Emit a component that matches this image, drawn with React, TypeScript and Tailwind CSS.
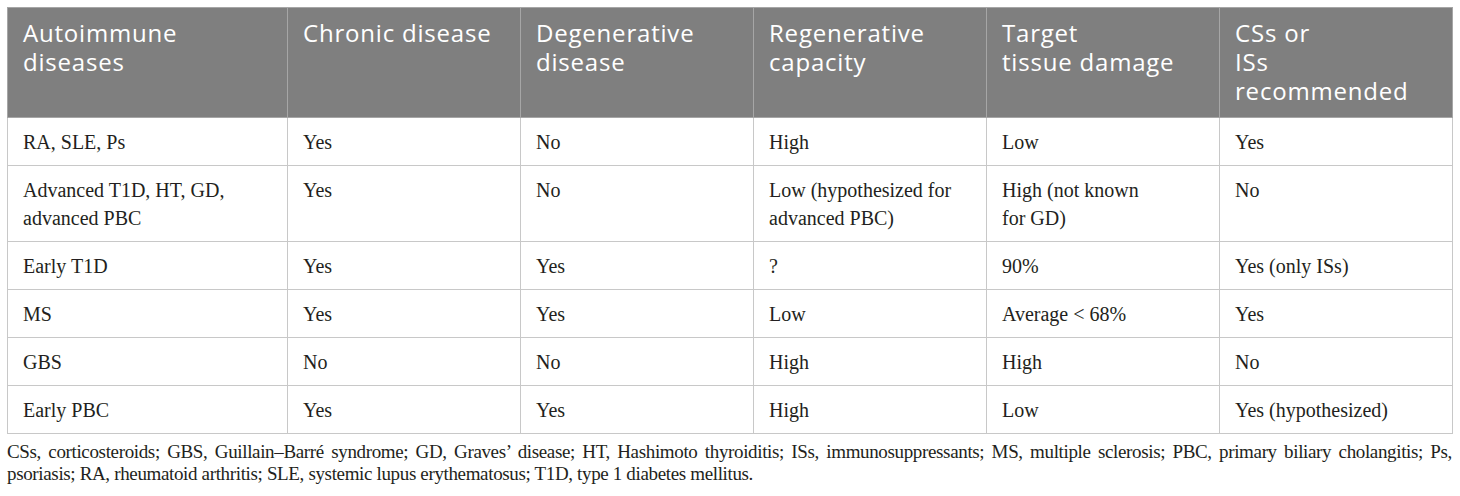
const headerLines: string[][] = [
  ["Autoimmune", "diseases"],
  ["Chronic disease"],
  ["Degenerative", "disease"],
  ["Regenerative", "capacity"],
  ["Target", "tissue damage"],
  ["CSs or", "ISs", "recommended"],
];

// each cell is a list of lines, broken where the reference breaks them
const rows: string[][][] = [
  [["RA, SLE, Ps"], ["Yes"], ["No"], ["High"], ["Low"], ["Yes"]],
  [
    ["Advanced T1D, HT, GD,", "advanced PBC"],
    ["Yes"],
    ["No"],
    ["Low (hypothesized for", "advanced PBC)"],
    ["High (not known", "for GD)"],
    ["No"],
  ],
  [["Early T1D"], ["Yes"], ["Yes"], ["?"], ["90%"], ["Yes (only ISs)"]],
  [["MS"], ["Yes"], ["Yes"], ["Low"], ["Average < 68%"], ["Yes"]],
  [["GBS"], ["No"], ["No"], ["High"], ["High"], ["No"]],
  [["Early PBC"], ["Yes"], ["Yes"], ["High"], ["Low"], ["Yes (hypothesized)"]],
];

export default function App() {
  return (
    <div className="w-[1460px] h-[496px] bg-white pt-[7px] pl-[7px] pr-[8px]">
      <table className="w-[1445px] table-fixed border-collapse">
        <colgroup>
          <col className="w-[280px]" />
          <col className="w-[233px]" />
          <col className="w-[233px]" />
          <col className="w-[233px]" />
          <col className="w-[233px]" />
          <col className="w-[233px]" />
        </colgroup>
        <thead>
          <tr className="bg-[#7f7f7f] h-[110px]">
            {headerLines.map((lines) => (
              <th
                key={lines.join(" ")}
                className="border border-[#a6a6a6] align-top text-left font-normal text-white pl-[15px] pr-2 pt-[10px] font-['Open_Sans',sans-serif] text-[24px] leading-[29px] tracking-[0.8px]"
              >
                {lines.map((l) => (
                  <div key={l}>{l}</div>
                ))}
              </th>
            ))}
          </tr>
        </thead>
        <tbody>
          {rows.map((r) => (
            <tr key={r[0][0]}>
              {r.map((lines, j) => (
                <td
                  key={j}
                  className="border border-[#c8c8c8] align-top text-left text-[#231f20] pl-[15px] pr-3 pt-[10px] pb-[9px] font-['Liberation_Serif',serif] text-[20px] leading-[28px] whitespace-nowrap"
                >
                  {lines.map((l) => (
                    <div key={l}>{l}</div>
                  ))}
                </td>
              ))}
            </tr>
          ))}
        </tbody>
      </table>
      <div className="mt-[7px] font-['Liberation_Serif',serif] text-[19px] leading-[22px] tracking-[-0.35px] text-[#231f20]">
        <div className="text-justify [text-align-last:justify] whitespace-nowrap">
          CSs, corticosteroids; GBS, Guillain–Barré syndrome; GD, Graves’ disease; HT, Hashimoto thyroiditis; ISs, immunosuppressants; MS, multiple sclerosis; PBC, primary biliary cholangitis; Ps,
        </div>
        <div>psoriasis; RA, rheumatoid arthritis; SLE, systemic lupus erythematosus; T1D, type 1 diabetes mellitus.</div>
      </div>
    </div>
  );
}
